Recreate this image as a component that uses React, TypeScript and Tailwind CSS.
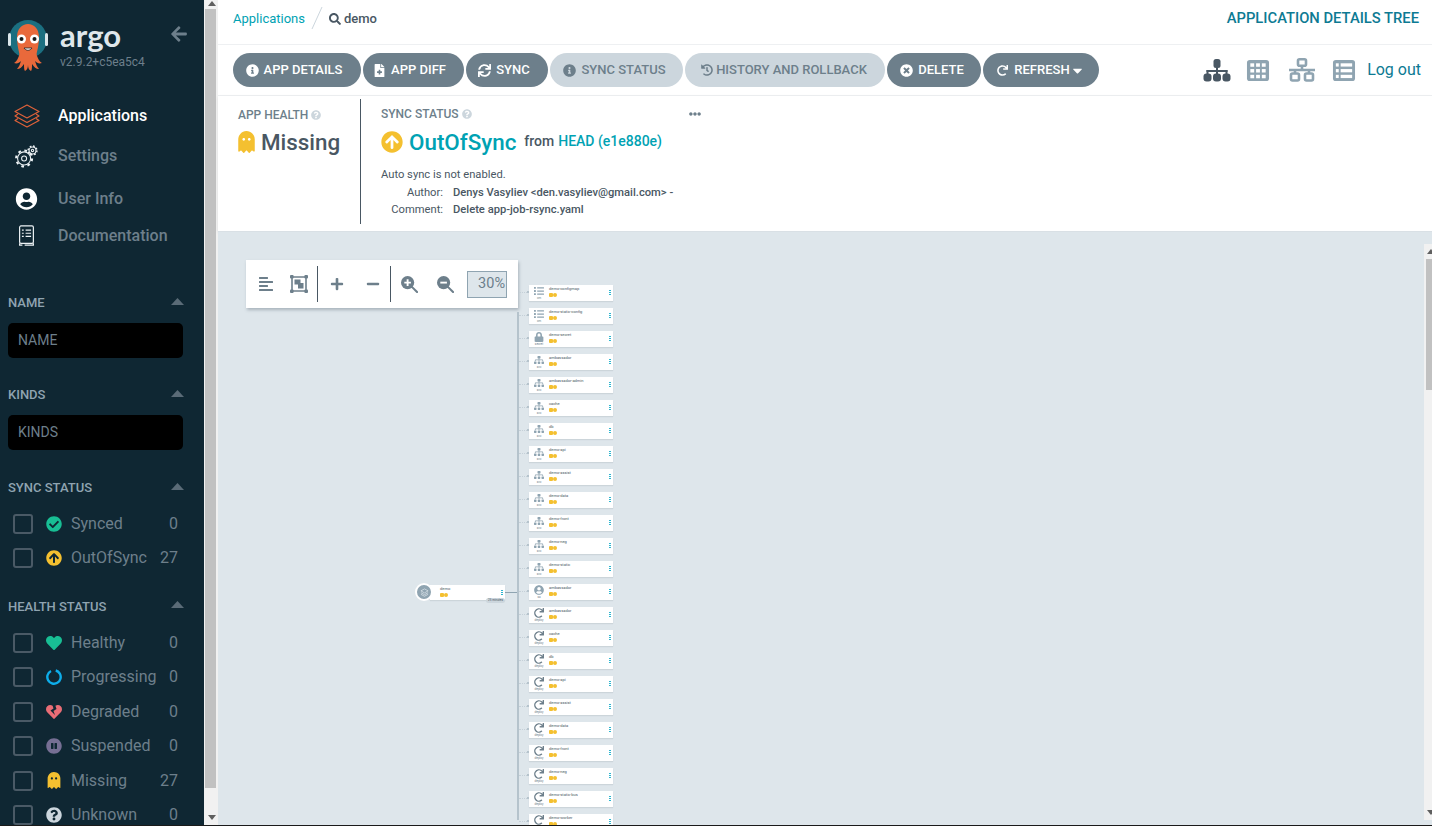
import React from 'react';
import {
  FaArrowCircleUp, FaArrowLeft, FaCaretDown, FaCheckCircle, FaEllipsisH, FaFileMedical, FaGhost, FaHeart,
  FaHeartBroken, FaHistory, FaInfoCircle, FaList, FaLock, FaMinus, FaPauseCircle, FaPlus, FaQuestionCircle,
  FaRedo, FaAlignLeft, FaSearch, FaSitemap, FaSync, FaTimesCircle, FaUserCircle,
} from 'react-icons/fa';

const FONT = 'font-[Roboto,"Liberation_Sans",sans-serif]';

function OctopusLogo() {
  return (
    <svg viewBox="0 0 40 52" className="w-[40px] h-[52px] shrink-0">
      <circle cx="20" cy="19" r="19" fill="#1b6f80" />
      <rect x="0" y="13" width="3" height="13" rx="1.5" fill="#dbe6ea" />
      <rect x="37" y="13" width="3" height="13" rx="1.5" fill="#dbe6ea" />
      <path d="M9 17c0-8 5-13 11-13s11 5 11 13c0 8-2 15-3 19H12c-1-4-3-11-3-19z" fill="#e9693b" />
      <path d="M12 32c-1 6-4 10-6 11 3 1 5 0 7-2-1 3-2 6-4 8 3 0 5-2 7-5 0 3 0 6 1 7 2-1 3-3 3-6 0 3 1 5 3 6 1-1 1-4 1-7 2 3 4 5 7 5-2-2-3-5-4-8 2 2 4 3 7 2-2-1-5-5-6-11z" fill="#e9693b" />
      <circle cx="13.5" cy="19" r="4.5" fill="#fff" />
      <circle cx="26.5" cy="19" r="4.5" fill="#fff" />
      <circle cx="13.5" cy="19" r="2" fill="#1a1a1a" />
      <circle cx="26.5" cy="19" r="2" fill="#1a1a1a" />
      <path d="M16 28c2 3 6 3 8 0z" fill="#fff" stroke="#222" strokeWidth="0.8" />
    </svg>
  );
}

function LayersIcon() {
  return (
    <svg viewBox="0 0 26 24" className="w-[26px] h-[24px]" fill="none" stroke="#e0623a" strokeWidth="1.2" strokeLinejoin="round">
      <path d="M13 1 L25 7.5 L13 14 L1 7.5 Z" />
      <path d="M4 10 L1 12 L13 18.5 L25 12 L22 10" />
      <path d="M4 14.5 L1 16.5 L13 23 L25 16.5 L22 14.5" />
    </svg>
  );
}

function CogsIcon() {
  return (
    <svg viewBox="0 0 24 24" className="w-[23px] h-[23px]" fill="none" stroke="#eef3f6" strokeWidth="1.1">
      <circle cx="9.5" cy="14" r="6.8" />
      <circle cx="9.5" cy="14" r="8.3" strokeWidth="2.2" strokeDasharray="2.8 3.72" />
      <circle cx="9.5" cy="14" r="2.6" />
      <circle cx="18.3" cy="5.7" r="3.6" />
      <circle cx="18.3" cy="5.7" r="4.6" strokeWidth="1.5" strokeDasharray="1.8 1.81" />
      <circle cx="18.3" cy="5.7" r="1.2" />
    </svg>
  );
}

function BookIcon() {
  return (
    <svg viewBox="0 0 18 24" className="w-[17px] h-[22px]" fill="none" stroke="#eef3f6" strokeWidth="1.3">
      <rect x="1.5" y="1" width="15" height="19" rx="1.5" />
      <path d="M1.5 20v2h3M7 22h9.5v-2" />
      <path d="M8 5.5h6M8 9h6M8 12.5h6M4 5.5h2M4 9h2M4 12.5h2" />
    </svg>
  );
}

function TreeViewIcon() {
  return (
    <svg viewBox="0 0 28 24" className="w-[28px] h-[24px]" fill="#495763">
      <rect x="10.5" y="1" width="7" height="9" rx="2.5" />
      <rect x="13" y="9" width="2" height="5" />
      <rect x="3.5" y="12" width="21" height="2" />
      <rect x="3.5" y="12" width="2" height="4" />
      <rect x="13" y="12" width="2" height="4" />
      <rect x="22.5" y="12" width="2" height="4" />
      <rect x="0.5" y="15.5" width="8" height="8" rx="3" />
      <rect x="10" y="15.5" width="8" height="8" rx="3" />
      <rect x="19.5" y="15.5" width="8" height="8" rx="3" />
    </svg>
  );
}

function PodsViewIcon() {
  const cells = [4.5, 10.5, 16.5].flatMap(y => [4, 10, 16].map(x => ({ x, y })));
  return (
    <svg viewBox="0 0 24 24" className="w-[24px] h-[23px] ml-[15px]">
      <rect x="0.5" y="1" width="23" height="22" rx="3" fill="#8fa4b1" />
      {cells.map((c, i) => <rect key={i} x={c.x} y={c.y} width="4" height="3.6" fill="#fff" />)}
    </svg>
  );
}

function NetworkViewIcon() {
  return (
    <svg viewBox="0 0 26 24" className="w-[26px] h-[24px] ml-[19px]" fill="none" stroke="#8fa4b1" strokeWidth="2.6">
      <rect x="9" y="1.3" width="8" height="6.5" rx="1.5" />
      <path d="M13 8v4M0 12h26M6 12v3M20 12v3" />
      <rect x="2" y="15.5" width="8" height="7" rx="1.5" />
      <rect x="16" y="15.5" width="8" height="7" rx="1.5" />
    </svg>
  );
}

function ListViewIcon() {
  return (
    <svg viewBox="0 0 24 24" className="w-[24px] h-[23px] ml-[17px]">
      <rect x="0.5" y="1" width="23" height="22" rx="3" fill="#8fa4b1" />
      {[4.5, 10.5, 16.5].map(y => (
        <g key={y} fill="#fff">
          <rect x="3.5" y={y} width="3" height="3.4" />
          <rect x="8.5" y={y} width="12" height="3.4" />
        </g>
      ))}
    </svg>
  );
}

function FitIcon() {
  return (
    <svg viewBox="0 0 18 18" className="w-[18px] h-[18px] ml-[16px]" fill="#6d7f8b">
      <path d="M2 2h14v14H2z" fill="none" stroke="#6d7f8b" strokeWidth="1.6" />
      <rect x="0" y="0" width="3.6" height="3.6" rx="1" />
      <rect x="14.4" y="0" width="3.6" height="3.6" rx="1" />
      <rect x="0" y="14.4" width="3.6" height="3.6" rx="1" />
      <rect x="14.4" y="14.4" width="3.6" height="3.6" rx="1" />
      <rect x="4.5" y="4.5" width="6" height="5" />
      <rect x="8" y="8" width="5.5" height="5.5" />
    </svg>
  );
}

function ZoomIcon({ plus, cls }: { plus?: boolean; cls: string }) {
  return (
    <svg viewBox="0 0 18 18" className={`w-[17px] h-[17px] ${cls}`}>
      <circle cx="7" cy="7" r="7" fill="#6d7f8b" />
      <path d="M11.5 11.5 L17 17" stroke="#6d7f8b" strokeWidth="2.2" strokeLinecap="round" />
      <path d={plus ? 'M3.5 7h7M7 3.5v7' : 'M3.5 7h7'} stroke="#fff" strokeWidth="2" />
    </svg>
  );
}

function ScrollArrow({ down }: { down?: boolean }) {
  return (
    <svg viewBox="0 0 10 6" className="w-[10px] h-[6px] shrink-0 mx-auto">
      <polygon points={down ? '1,0 9,0 5,5' : '1,5 9,5 5,0'} fill="#5f5f5f" />
    </svg>
  );
}

function FilterHead({ title }: { title: string }) {
  return (
    <div className="flex items-center justify-between h-[16px] pr-[20px]">
      <span className="text-[13px] font-medium text-[#8fa4b1]">{title}</span>
      <svg viewBox="0 0 13 7" className="w-[13px] h-[7px] -mt-[4px]">
        <polygon points="0,7 13,7 6.5,0" fill="#5a6b77" />
      </svg>
    </div>
  );
}

function FilterInput({ text }: { text: string }) {
  return (
    <div className="mt-[12px] w-[175px] h-[35px] bg-black rounded-[5px] flex items-center pl-[10px] text-[14px] text-[#6d7f8b]">{text}</div>
  );
}

function FilterRow({ icon, label, count }: { icon: React.ReactNode; label: string; count: number }) {
  return (
    <div className="flex items-center h-[34.4px] pl-[5px] pr-[26px]">
      <span className="w-[20px] h-[20px] border-2 border-[#4a5a66] rounded-[3px] shrink-0" />
      <span className="w-[16px] ml-[13px] flex justify-center shrink-0">{icon}</span>
      <span className="ml-[9px] text-[16px] text-[#6d7f8b] whitespace-nowrap">{label}</span>
      <span className="ml-auto text-[16px] text-[#6d7f8b]">{count}</span>
    </div>
  );
}

function ProgressRing() {
  return (
    <svg viewBox="0 0 16 16" className="w-[16px] h-[16px]" fill="none">
      <circle cx="8" cy="8" r="6.7" stroke="#0dadea" strokeWidth="2.4" strokeDasharray="37 5" transform="rotate(-75 8 8)" />
    </svg>
  );
}

function Sidebar() {
  const navTextOff = 'ml-[20px] text-[16px] font-medium text-[#6d7f8b]';
  return (
    <div className="flex h-full shrink-0">
      <div className="w-[204px] bg-[#0f2733] overflow-hidden pl-[8px]">
        <div className="flex pt-[20px]">
          <OctopusLogo />
          <div className="ml-[12px] w-[110px] -mt-[4px]">
            <div className="font-['Lato'] font-bold text-[31px] leading-[38px] text-[#dfe7eb]">argo</div>
            <div className="text-[12px] leading-[14px] text-[#6d7f8b] mt-[1px]">v2.9.2+c5ea5c4</div>
          </div>
          <FaArrowLeft className="text-[#6d7f8b] text-[18px] mt-[5px] shrink-0" />
        </div>

        <div className="flex items-center mt-[32px] pl-[6px] h-[24px]">
          <LayersIcon />
          <span className="ml-[18px] text-[16px] font-medium text-white">Applications</span>
        </div>
        <div className="flex items-center mt-[16px] pl-[7px] h-[24px]">
          <CogsIcon />
          <span className={navTextOff}>Settings</span>
        </div>
        <div className="flex items-center mt-[19px] pl-[7px] h-[24px]">
          <FaUserCircle className="text-white text-[22px] w-[23px]" />
          <span className={navTextOff}>User Info</span>
        </div>
        <div className="flex items-center mt-[13px] pl-[10px] h-[24px]">
          <BookIcon />
          <span className="ml-[23px] text-[16px] font-medium text-[#6d7f8b]">Documentation</span>
        </div>

        <div className="mt-[47px]">
          <FilterHead title="NAME" />
          <FilterInput text="NAME" />
        </div>
        <div className="mt-[29px]">
          <FilterHead title="KINDS" />
          <FilterInput text="KINDS" />
        </div>
        <div className="mt-[30px]">
          <FilterHead title="SYNC STATUS" />
          <div className="mt-[10.6px]">
            <FilterRow icon={<FaCheckCircle className="text-[#18be94] text-[16px]" />} label="Synced" count={0} />
            <FilterRow icon={<FaArrowCircleUp className="text-[#f4c030] text-[16px]" />} label="OutOfSync" count={27} />
          </div>
        </div>
        <div className="mt-[23.6px]">
          <FilterHead title="HEALTH STATUS" />
          <div className="mt-[10.8px]">
            <FilterRow icon={<FaHeart className="text-[#18be94] text-[16px]" />} label="Healthy" count={0} />
            <FilterRow icon={<ProgressRing />} label="Progressing" count={0} />
            <FilterRow icon={<FaHeartBroken className="text-[#e96d76] text-[16px]" />} label="Degraded" count={0} />
            <FilterRow icon={<FaPauseCircle className="text-[#766f94] text-[16px]" />} label="Suspended" count={0} />
            <FilterRow icon={<FaGhost className="text-[#f4c030] text-[17px]" />} label="Missing" count={27} />
            <FilterRow icon={<FaQuestionCircle className="text-[#ccd6dd] text-[16px]" />} label="Unknown" count={0} />
          </div>
        </div>
      </div>
      <div className="w-[14px] bg-[#f1f1f1] flex flex-col pl-[1px] pt-[1px]">
        <ScrollArrow />
        <div className="w-[11px] mt-[2px] h-[779px] bg-[#c1c1c1]" />
        <div className="mt-auto mb-[4px]"><ScrollArrow down /></div>
      </div>
    </div>
  );
}

function ActionButton({ icon, label, off, cls, after }: { icon: React.ReactNode; label: string; off?: boolean; cls: string; after?: React.ReactNode }) {
  return (
    <button className={`${cls} h-[34px] rounded-full flex items-center justify-center text-[13px] font-medium whitespace-nowrap ${off ? 'bg-[#ccd6dd] text-[#6d7f8b]' : 'bg-[#6d7f8b] text-white'}`}>
      {icon}
      {label}
      {after}
    </button>
  );
}

function HelpDot() {
  return <FaQuestionCircle className="inline text-[#ccd6dd] text-[10px] ml-[3px] align-[-1px]" />;
}

function TopArea() {
  return (
    <div className="bg-white shrink-0">
      <div className="h-[45px] border-b border-[#eef0f2] flex items-center pl-[15px] pr-[13px] pb-[7px]">
        <span className="text-[13px] text-[#00a2b3]">Applications</span>
        <svg viewBox="0 0 12 24" className="w-[12px] h-[24px] mx-[6px] -mt-[2px]"><path d="M1 23 L11 1" stroke="#ccd6dd" strokeWidth="1" /></svg>
        <FaSearch className="text-[#495763] text-[12px] mr-[3px]" />
        <span className="text-[13px] font-medium text-[#495763]">demo</span>
        <span className="ml-auto text-[14.75px] font-medium text-[#0d7a93]">APPLICATION DETAILS TREE</span>
      </div>

      <div className="h-[51px] border-b border-[#eef0f2] flex items-center pl-[15px] pr-[11px]">
        <div className="flex gap-[2px]">
          <ActionButton cls="w-[128px] pr-[6px]" label="APP DETAILS" icon={<FaInfoCircle className="text-[13px] mr-[5px]" />} />
          <ActionButton cls="w-[101px] pr-[8px]" label="APP DIFF" icon={<FaFileMedical className="text-[13px] mr-[5px]" />} />
          <ActionButton cls="w-[82px] pr-[6px]" label="SYNC" icon={<FaSync className="text-[13px] mr-[5px]" />} />
          <ActionButton cls="w-[133px] pr-[4px]" off label="SYNC STATUS" icon={<FaInfoCircle className="text-[13px] mr-[5px]" />} />
          <ActionButton cls="w-[200px] pr-[2px]" off label="HISTORY AND ROLLBACK" icon={<FaHistory className="text-[12px] mr-[3px]" />} />
          <ActionButton cls="w-[94px] pr-[4px]" label="DELETE" icon={<FaTimesCircle className="text-[13px] mr-[5px]" />} />
          <ActionButton
            cls="w-[116px]"
            label="REFRESH"
            icon={<FaRedo className="text-[11px] mr-[6px]" />}
            after={<FaCaretDown className="text-[15px]" />}
          />
        </div>
        <div className="ml-auto flex items-center">
          <TreeViewIcon />
          <PodsViewIcon />
          <NetworkViewIcon />
          <ListViewIcon />
          <span className="ml-[11px] text-[16px] text-[#0d7a93]">Log out</span>
        </div>
      </div>

      <div className="h-[136px] flex border-b border-[#d9e0e5] shadow-[0_1px_3px_rgba(0,0,0,0.08)] pt-[3px] pl-[20px]">
        <div className="w-[123px] h-[125px] border-r border-[#495763] pt-[9px]">
          <div className="text-[12px] font-medium text-[#6d7f8b] leading-[14px]">APP HEALTH<HelpDot /></div>
          <div className="flex items-center mt-[4px]">
            <FaGhost className="text-[#f4c030] text-[22px] w-[17px]" />
            <span className="ml-[6px] text-[22.4px] font-medium text-[#495763] leading-[32px]">Missing</span>
          </div>
        </div>
        <div className="ml-[20px] w-[322px] pt-[8px] relative">
          <div className="text-[12px] font-medium text-[#6d7f8b] leading-[14px]">SYNC STATUS<HelpDot /></div>
          <FaEllipsisH className="absolute left-[308px] top-[9px] text-[12px] text-[#6d7f8b]" />
          <div className="flex items-center mt-[5px]">
            <FaArrowCircleUp className="text-[#f4c030] text-[22px]" />
            <span className="ml-[6px] text-[22.4px] font-medium text-[#00a2b3] leading-[32px]">OutOfSync</span>
            <span className="ml-[8px] text-[14px] font-medium text-[#495763] -mt-[1px]">from</span>
            <span className="ml-[4px] text-[14px] font-medium text-[#00a2b3] -mt-[1px]">HEAD (e1e880e)</span>
          </div>
          <div className="text-[11.2px] text-[#495763] mt-[9px] leading-[16px]">Auto sync is not enabled.</div>
          <div className="flex text-[11.2px] leading-[17px] mt-[1px]">
            <div className="w-[62px] text-right text-[#495763]">Author:<br />Comment:</div>
            <div className="ml-[10px] font-medium text-[#495763] whitespace-nowrap">Denys Vasyliev &lt;den.vasyliev@gmail.com&gt; -<br />Delete app-job-rsync.yaml</div>
          </div>
        </div>
      </div>
    </div>
  );
}

function GraphToolbar() {
  const ic = 'text-[#6d7f8b]';
  return (
    <div className="absolute left-[28px] top-[28px] w-[272px] h-[48px] bg-white shadow-[1px_2px_3px_rgba(73,87,99,0.35)] flex items-center">
      <FaAlignLeft className={`${ic} text-[16px] ml-[12px]`} />
      <FitIcon />
      <div className="w-px h-[36px] bg-[#495763] ml-[9px]" />
      <FaPlus className={`${ic} text-[14px] ml-[12px]`} />
      <FaMinus className={`${ic} text-[14px] ml-[22px]`} />
      <div className="w-px h-[36px] bg-[#495763] ml-[10px]" />
      <ZoomIcon plus cls="ml-[10px]" />
      <ZoomIcon cls="ml-[19px]" />
      <div className="ml-[13px] w-[40px] h-[27px] bg-[#dee6eb] border border-[#8fa4b1] text-[14.5px] text-[#6d7f8b] flex items-center justify-end pr-[1px]">30%</div>
    </div>
  );
}

type NodeKind = 'cm' | 'secret' | 'svc' | 'sa' | 'deploy';

const NODES: { name: string; kind: NodeKind }[] = [
  { name: 'demo-configmap', kind: 'cm' },
  { name: 'demo-static-config', kind: 'cm' },
  { name: 'demo-secret', kind: 'secret' },
  { name: 'ambassador', kind: 'svc' },
  { name: 'ambassador-admin', kind: 'svc' },
  { name: 'cache', kind: 'svc' },
  { name: 'db', kind: 'svc' },
  { name: 'demo-api', kind: 'svc' },
  { name: 'demo-assist', kind: 'svc' },
  { name: 'demo-data', kind: 'svc' },
  { name: 'demo-front', kind: 'svc' },
  { name: 'demo-neg', kind: 'svc' },
  { name: 'demo-static', kind: 'svc' },
  { name: 'ambassador', kind: 'sa' },
  { name: 'ambassador', kind: 'deploy' },
  { name: 'cache', kind: 'deploy' },
  { name: 'db', kind: 'deploy' },
  { name: 'demo-api', kind: 'deploy' },
  { name: 'demo-assist', kind: 'deploy' },
  { name: 'demo-data', kind: 'deploy' },
  { name: 'demo-front', kind: 'deploy' },
  { name: 'demo-neg', kind: 'deploy' },
  { name: 'demo-static-bus', kind: 'deploy' },
  { name: 'demo-worker', kind: 'deploy' },
];

function kindIcon(kind: NodeKind) {
  const c = 'text-[#8fa4b1] text-[10px]';
  if (kind === 'cm') return <FaList className={c} />;
  if (kind === 'secret') return <FaLock className={c} />;
  if (kind === 'svc') return <FaSitemap className={c} />;
  if (kind === 'sa') return <FaUserCircle className={c} />;
  return <FaRedo className="text-[#6d7f8b] text-[10px]" />;
}

function NodeStatus() {
  return (
    <div className="flex gap-[0.5px] mt-[2px]">
      <span className="w-[3.5px] h-[3.5px] rounded-[1px] bg-[#f4c030]" />
      <span className="w-[3.5px] h-[3.5px] rounded-full bg-[#f4c030]" />
    </div>
  );
}

function NodeMenu() {
  return (
    <div className="ml-auto mr-[2px] mt-[5px] flex flex-col gap-[1px]">
      <span className="w-[2px] h-[1px] bg-[#2bb5cf]" />
      <span className="w-[2px] h-[1px] bg-[#2bb5cf]" />
      <span className="w-[2px] h-[1px] bg-[#2bb5cf]" />
    </div>
  );
}

function TreeNode({ name, kind, last }: { name: string; kind: NodeKind; last?: boolean }) {
  return (
    <div className="w-[84px] h-[16px] bg-white flex items-start shrink-0 shadow-[0_1px_1px_rgba(73,87,99,0.12)]">
      <div className="w-[20px] pt-[1px] flex flex-col items-center">
        {kindIcon(kind)}
        {!last && <span className="text-[3px] leading-[4px] text-[#6d7f8b]">{kind}</span>}
      </div>
      <div className="pt-[2px]">
        <div className="text-[4px] leading-[4px] text-[#495763] whitespace-nowrap">{name}</div>
        <NodeStatus />
      </div>
      <NodeMenu />
    </div>
  );
}

function Canvas() {
  return (
    <div className="relative flex-1 bg-[#dee6eb] overflow-hidden">
      <GraphToolbar />

      {/* trunk line and root connector */}
      <div className="absolute left-[299px] top-[80px] w-[2px] h-[508px] bg-[#b5c3cc]" />
      <div className="absolute left-[287px] top-[360px] w-[12px] h-px bg-[#8fa4b1]" />

      {/* root application node */}
      <div className="absolute left-[212px] top-[353px] w-[75px] h-[15px] bg-white flex shadow-[0_1px_1px_rgba(73,87,99,0.12)]">
        <div className="pl-[10px] pt-[2px]">
          <div className="text-[4px] leading-[4px] text-[#495763]">demo</div>
          <NodeStatus />
        </div>
        <NodeMenu />
      </div>
      <div className="absolute left-[197px] top-[351px] w-[18px] h-[18px] rounded-full bg-[#8fa4b1] border-2 border-white flex items-center justify-center">
        <svg viewBox="0 0 10 10" className="w-[9px] h-[9px]" fill="none" stroke="#dee6eb" strokeWidth="0.8">
          <path d="M5 1 L9 3.2 L5 5.4 L1 3.2 Z M1 5.2 L5 7.4 L9 5.2 M1 7 L5 9.2 L9 7" />
        </svg>
      </div>
      <div className="absolute left-[268px] top-[366px] w-[19px] h-[5px] rounded-full bg-[#ccd6dd] text-[3px] leading-[5px] text-center text-[#495763]">25 minutes</div>

      {/* child nodes */}
      <div className="absolute left-[311px] top-[53px] flex flex-col gap-[7px]">
        {NODES.map((n, i) => (
          <div key={i} className="relative">
            <div className="absolute -left-[10px] top-[7px] w-[8px] border-t border-dotted border-[#c5d0d8]" />
            <div className="absolute -left-[2px] top-[6px] w-[2px] h-[2px] bg-[#b5c3cc]" />
            <TreeNode name={n.name} kind={n.kind} last={i === NODES.length - 1} />
          </div>
        ))}
      </div>

      {/* canvas scrollbar */}
      <div className="absolute right-0 top-[12px] w-[8px] h-[576px] bg-[#f1f1f1] flex flex-col">
        <div className="pl-[2px] pt-[5px]"><ScrollArrow /></div>
        <div className="ml-[2px] mt-[4px] w-[6px] h-[131px] bg-[#c1c1c1]" />
        <div className="mt-auto pl-[2px] pb-[4px]"><ScrollArrow down /></div>
      </div>
    </div>
  );
}

export default function App() {
  return (
    <div className={`${FONT} w-[1432px] h-[826px] overflow-hidden flex flex-col bg-[#1a1a1a]`}>
      <div className="flex h-[825px]">
        <Sidebar />
        <div className="flex-1 flex flex-col min-w-0">
          <TopArea />
          <Canvas />
        </div>
      </div>
    </div>
  );
}
